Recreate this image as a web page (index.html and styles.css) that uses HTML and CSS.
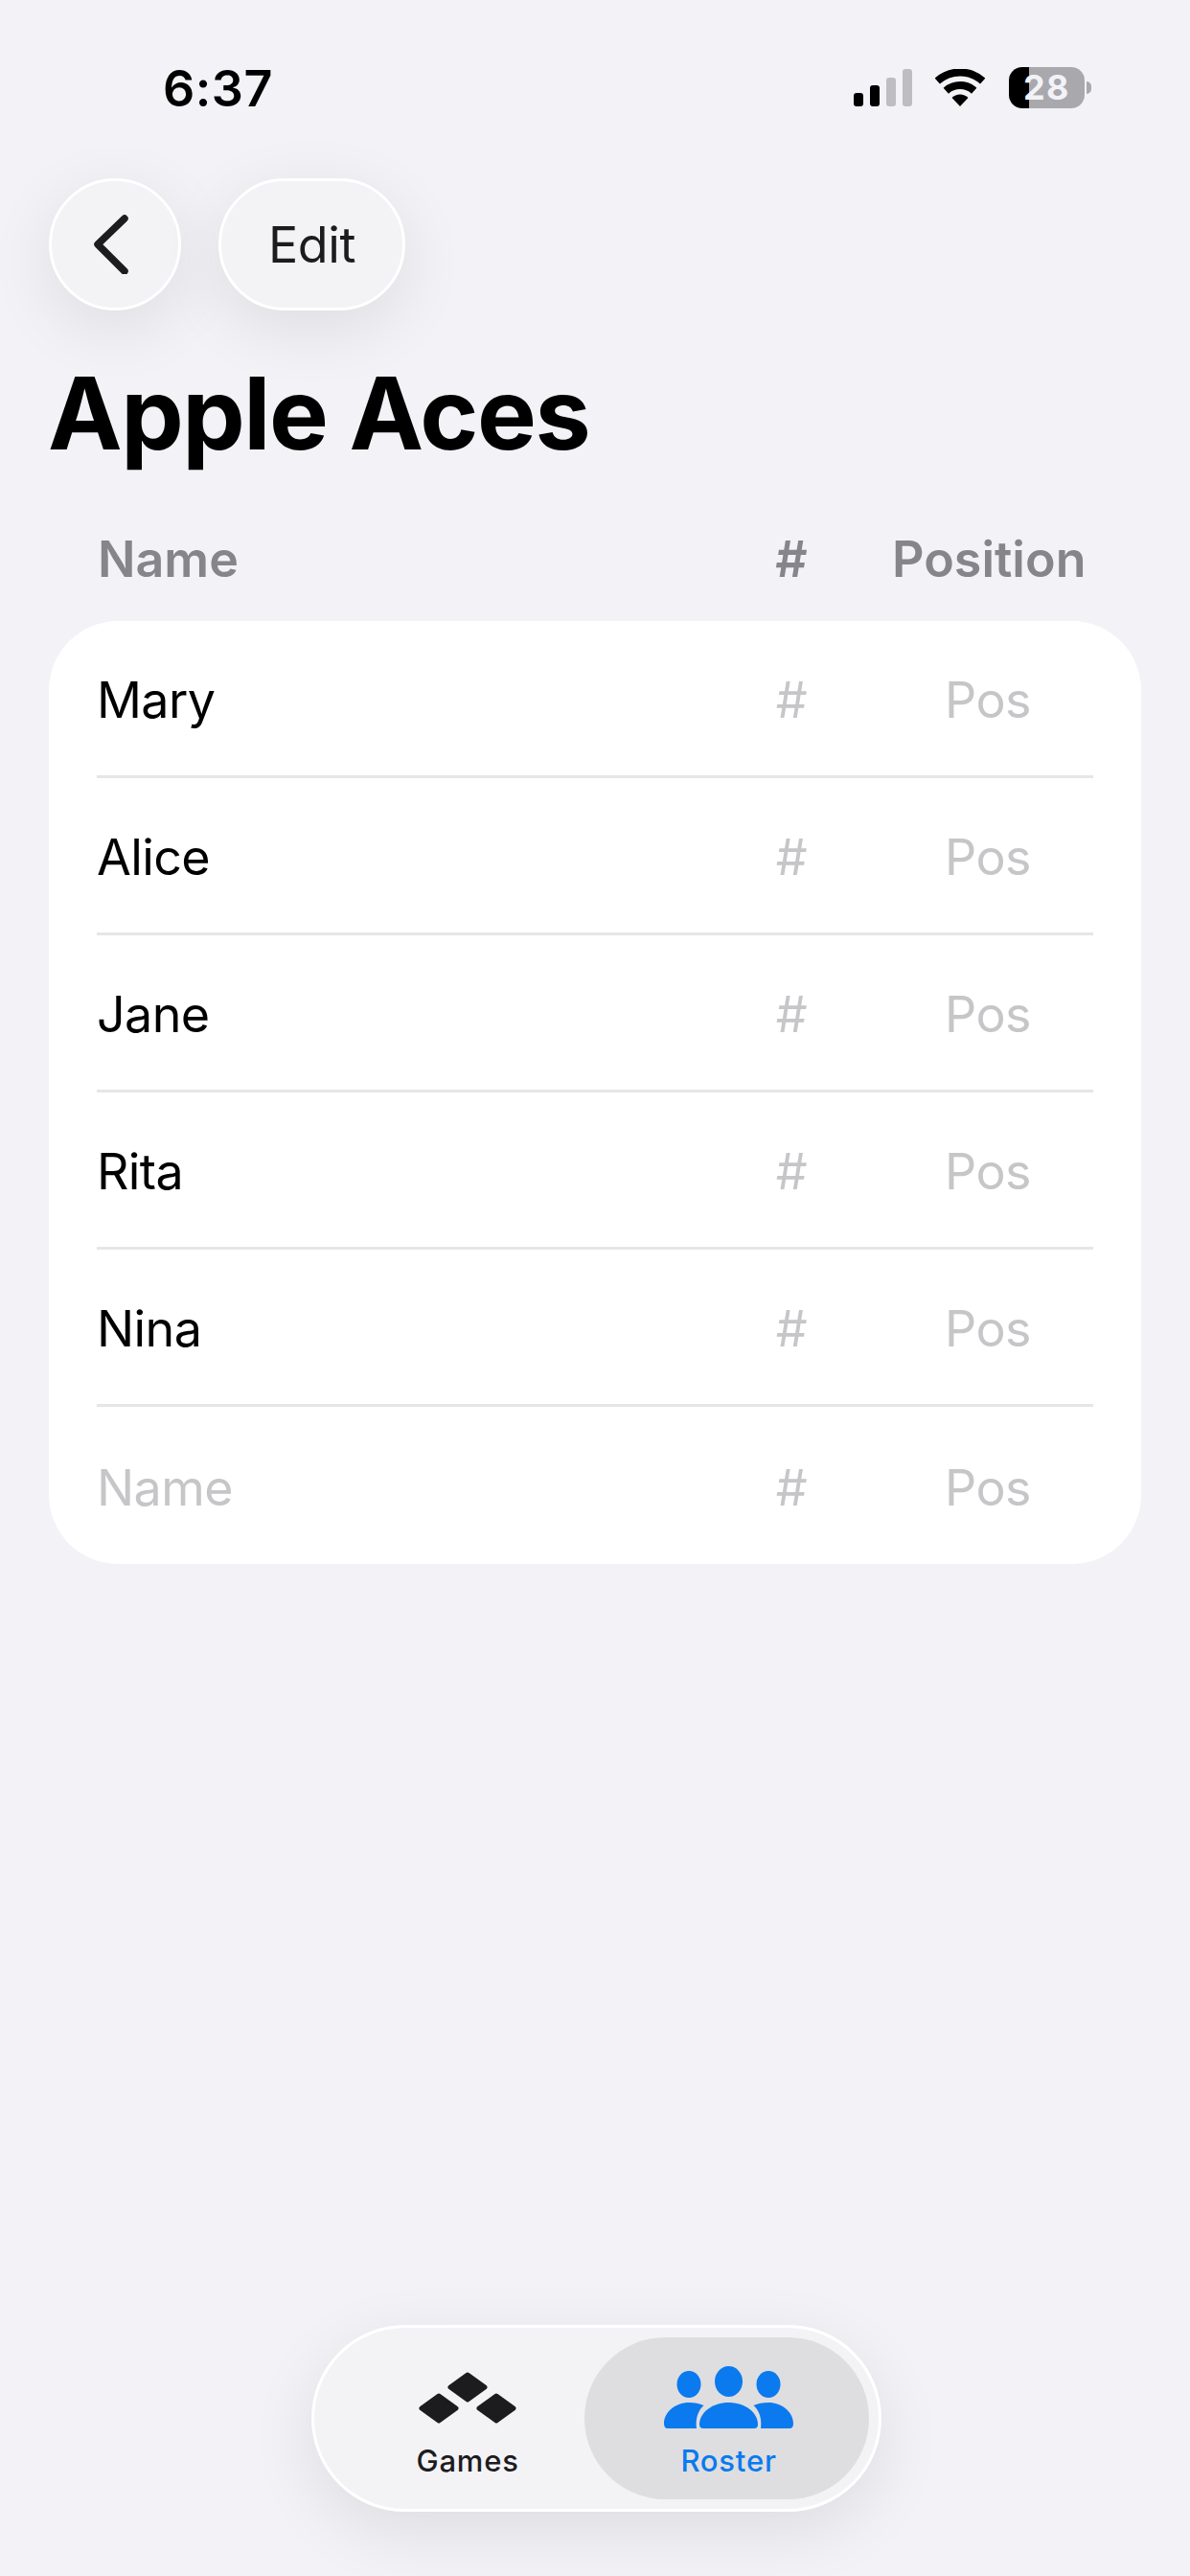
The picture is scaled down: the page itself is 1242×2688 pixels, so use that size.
FILE: index.html
```html
<!DOCTYPE html>
<html lang="en">
<head>
  <meta charset="UTF-8" />
  <meta name="viewport" content="width=device-width, initial-scale=1.0" />
  <title>Apple Aces</title>
  <link rel="stylesheet" href="styles.css">
</head>
<body>
  <header class="status-bar">
    <span class="time">6:37</span>
    <div class="status-icons">
      <div class="signal">
        <span class="bar bar-1"></span>
        <span class="bar bar-2"></span>
        <span class="bar bar-3 off"></span>
        <span class="bar bar-4 off"></span>
      </div>
      <svg class="wifi" viewBox="0 0 52 39" width="52" height="39">
        <path d="M2.25 12.6A35.5 35.5 0 0 1 49.75 12.6" fill="none" stroke="#000" stroke-width="8"/>
        <path d="M11.3 22.65A22 22 0 0 1 40.7 22.65" fill="none" stroke="#000" stroke-width="8"/>
        <path d="M26 39L17.5 30A12 12 0 0 1 34.5 30Z" fill="#000"/>
      </svg>
      <div class="battery-wrap">
        <div class="battery">28</div>
        <span class="battery-nub"></span>
      </div>
    </div>
  </header>

  <nav class="top-actions">
    <button class="round-btn back-btn" aria-label="Back">
      <svg viewBox="0 0 38 62" width="38" height="62">
        <path d="M33 4L5 31L33 59" fill="none" stroke="#1c1c1e" stroke-width="7.5" stroke-linecap="round" stroke-linejoin="round"/>
      </svg>
    </button>
    <button class="round-btn edit-btn">Edit</button>
  </nav>

  <h1 class="title">Apple Aces</h1>

  <div class="roster-head">
    <span>Name</span>
    <span class="col-center">#</span>
    <span class="col-center">Position</span>
  </div>

  <div class="roster-card">
    <div class="roster-row"><span>Mary</span><span class="col-center muted">#</span><span class="col-center muted">Pos</span></div>
    <div class="roster-row"><span>Alice</span><span class="col-center muted">#</span><span class="col-center muted">Pos</span></div>
    <div class="roster-row"><span>Jane</span><span class="col-center muted">#</span><span class="col-center muted">Pos</span></div>
    <div class="roster-row"><span>Rita</span><span class="col-center muted">#</span><span class="col-center muted">Pos</span></div>
    <div class="roster-row"><span>Nina</span><span class="col-center muted">#</span><span class="col-center muted">Pos</span></div>
    <div class="roster-row"><span class="muted">Name</span><span class="col-center muted">#</span><span class="col-center muted">Pos</span></div>
  </div>

  <div class="tab-bar">
    <div class="tab tab-games">
      <div class="tab-icon">
        <svg viewBox="0 0 104 54" width="104" height="54" fill="#1c1c1e" stroke="#1c1c1e" stroke-width="5" stroke-linejoin="round">
          <polygon points="52,3 70,16 52,29 34,16"/>
          <polygon points="22,25 40,38 22,51 4,38"/>
          <polygon points="82,25 100,38 82,51 64,38"/>
        </svg>
      </div>
      <span class="tab-label">Games</span>
    </div>
    <div class="tab tab-roster">
      <div class="tab-icon">
        <svg viewBox="0 0 135 66" width="135" height="66" fill="#0a7aee">
          <ellipse cx="67.5" cy="16" rx="14.5" ry="16"/>
          <ellipse cx="26" cy="19" rx="12.5" ry="14"/>
          <ellipse cx="109" cy="19" rx="12.5" ry="14"/>
          <path d="M41 65H94Q98 65 98 61C98 48 84 38 67.5 38C51 38 37 48 37 61Q37 65 41 65Z"/>
          <path d="M4 65H34C32.5 54 36 46 41.5 41C37 39 32 38 26 38C12 38 0 48 0 60Q0 65 4 65Z"/>
          <path d="M131 65H101C102.5 54 99 46 93.5 41C98 39 103 38 109 38C123 38 135 48 135 60Q135 65 131 65Z"/>
        </svg>
      </div>
      <span class="tab-label">Roster</span>
    </div>
  </div>
</body>
</html>
```

FILE: styles.css
```css
* { box-sizing: border-box; }

html, body { margin: 0; padding: 0; }

body {
  width: 1242px;
  height: 2688px;
  overflow: hidden;
  display: flex;
  flex-direction: column;
  background: #f2f2f7;
  color: #000;
  font-family: Inter, "Liberation Sans", sans-serif;
}

/* status bar */
.status-bar {
  height: 186px;
  padding: 68px 103px 0 170px;
  display: flex;
  justify-content: space-between;
  align-items: flex-start;
}

.time {
  font-size: 52px;
  font-weight: 600;
  line-height: 50px;
  letter-spacing: 0.5px;
}

.status-icons {
  display: flex;
  align-items: flex-end;
  height: 43px;
  margin-top: 2px;
}

.signal {
  display: flex;
  align-items: flex-end;
  gap: 7px;
  margin-bottom: 2px;
}

.bar { width: 10px; background: #000; border-radius: 3px; }
.bar.off { background: #bdbdc2; }
.bar-1 { height: 14px; }
.bar-2 { height: 22px; }
.bar-3 { height: 30px; }
.bar-4 { height: 39px; }

.wifi { margin: 0 25px 2px 24px; }

.battery-wrap { display: flex; align-items: center; }

.battery {
  width: 79px;
  height: 43px;
  border-radius: 14px;
  background: linear-gradient(90deg, #000 27%, #a8a8ad 27%);
  color: #f2f2f7;
  font-size: 36px;
  font-weight: 700;
  line-height: 43px;
  letter-spacing: 1.5px;
  text-align: center;
}

.battery-nub {
  width: 5px;
  height: 13px;
  margin-left: 2px;
  background: #a8a8ad;
  border-radius: 0 6px 6px 0;
}

/* buttons */
.top-actions {
  display: flex;
  gap: 39px;
  padding-left: 51px;
}

.round-btn {
  height: 138px;
  padding: 0;
  display: flex;
  align-items: center;
  justify-content: center;
  background: #f3f3f6;
  border: 3px solid #fff;
  border-radius: 69px;
  box-shadow: 0 18px 70px rgba(0, 0, 0, 0.09);
  color: #1c1c1e;
  font-family: inherit;
  font-size: 52px;
  letter-spacing: -0.4px;
}

.back-btn { width: 138px; }
.back-btn svg { margin-right: 8px; }
.edit-btn { width: 195px; }

.title {
  margin: 44px 0 0 50px;
  font-size: 104px;
  font-weight: 700;
  line-height: 126px;
  letter-spacing: -1.5px;
}

/* table */
.roster-head,
.roster-row {
  display: grid;
  grid-template-columns: 1fr 80px 200px;
  column-gap: 65px;
  align-items: center;
  font-size: 52px;
}

.roster-head {
  height: 62px;
  margin: 58px 111px 0 102px;
  color: #85858b;
  font-weight: 600;
}

.roster-card {
  margin: 34px 51px 0;
  padding: 0 50px;
  background: #fff;
  border-radius: 72px;
}

.roster-row {
  height: 164px;
  padding: 4px 10px 0 0;
  border-bottom: 3px solid #e6e6e9;
  letter-spacing: -0.6px;
}

.roster-row:last-child { border-bottom: none; }

.col-center { text-align: center; }
.muted { color: #c6c6c9; }

/* tab bar */
.tab-bar {
  width: 595px;
  height: 195px;
  margin: auto 0 67px 325px;
  padding: 10px 10px 10px 38px;
  display: flex;
  background: #f3f3f6;
  border: 3px solid #fff;
  border-radius: 98px;
  box-shadow: 0 20px 70px rgba(0, 0, 0, 0.09);
}

.tab {
  padding-top: 30px;
  display: flex;
  flex-direction: column;
  align-items: center;
}

.tab-games { width: 245px; color: #1c1c1e; }

.tab-roster {
  width: 298px;
  padding-left: 4px;
  background: #dedee0;
  border-radius: 85px;
  color: #0a7aee;
}

.tab-icon {
  height: 66px;
  display: flex;
  align-items: center;
}

.tab-label {
  margin-top: 15px;
  font-size: 31px;
  font-weight: 500;
  line-height: 36px;
  letter-spacing: 0.8px;
}
```
